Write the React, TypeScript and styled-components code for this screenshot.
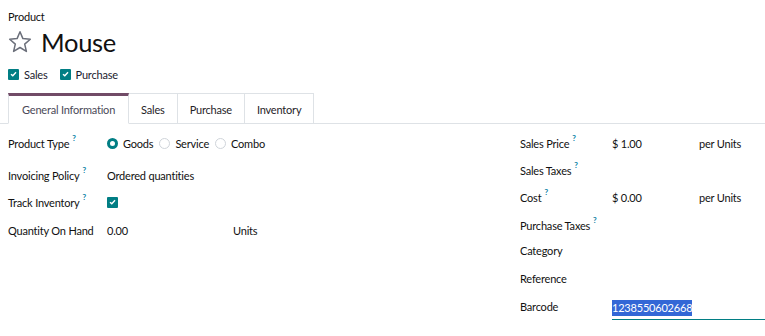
import React from "react";
import styled, { createGlobalStyle } from "styled-components";

const Global = createGlobalStyle`
  html, body { margin: 0; padding: 0; background: #fff; }
  body { font-family: Lato, "Noto Sans", sans-serif; font-size: 11px; letter-spacing: -0.2px; color: #1f2328; }
`;

const Page = styled.div`
  width: 765px;
  height: 336px;
  overflow: hidden;
  padding-top: 9px;
`;

const Header = styled.div`
  padding: 0 8px;
`;

const Kicker = styled.div`
  font-size: 11px;
  line-height: 16px;
  color: #111;
`;

const TitleRow = styled.div`
  display: flex;
  align-items: center;
  gap: 9px;
  height: 32px;
  margin-top: 1px;
`;

const Title = styled.h1`
  margin: 0;
  font-weight: 400;
  font-size: 25.5px;
  letter-spacing: -0.3px;
  line-height: 32px;
  color: #111;
`;

const Options = styled.div`
  display: flex;
  align-items: center;
  gap: 12px;
  margin-top: 8px;
  height: 16px;
`;

const Opt = styled.label`
  display: flex;
  align-items: center;
  gap: 5px;
  color: #1a1a2e;
`;

const Box = styled.span`
  width: 11px;
  height: 11px;
  border-radius: 1px;
  background: #017e84;
  display: inline-flex;
  align-items: center;
  justify-content: center;
  flex: none;
`;

const Tabs = styled.div`
  display: flex;
  margin-top: 11px;
  padding-left: 8px;
  border-bottom: 1px solid #dee2e6;
  height: 30px;
`;

const Tab = styled.div<{ $active?: boolean }>`
  display: flex;
  align-items: center;
  padding: 0 ${(p) => (p.$active ? 13 : 12)}px;
  margin-bottom: -1px;
  border: 1px solid #dee2e6;
  border-left-width: ${(p) => (p.$active ? 1 : 0)}px;
  border-top: ${(p) => (p.$active ? "3px solid #714b67" : "1px solid #dee2e6")};
  background: #fff;
  border-bottom-color: ${(p) => (p.$active ? "#fff" : "#dee2e6")};
  color: ${(p) => (p.$active ? "#4a4a58" : "#1f2328")};
  padding-top: ${(p) => (p.$active ? 0 : 2)}px;
`;

const Form = styled.div`
  display: flex;
  padding: 8px 0 0 8px;
`;

const Col = styled.div<{ $w: number }>`
  width: ${(p) => p.$w}px;
  display: flex;
  flex-direction: column;
  flex: none;
`;

const Row = styled.div<{ $mb: number }>`
  display: flex;
  align-items: center;
  height: 22px;
  margin-bottom: ${(p) => p.$mb}px;
`;

const Label = styled.div<{ $w: number }>`
  width: ${(p) => p.$w}px;
  flex: none;
  color: #111;
  display: flex;
  align-items: flex-start;
`;

const Help = styled.sup`
  font-size: 8px;
  color: #0e7fa6;
  margin-left: 3px;
  font-weight: 700;
  position: relative;
  top: -3px;
  line-height: 1;
  vertical-align: baseline;
`;

const Value = styled.div<{ $w?: number }>`
  width: ${(p) => (p.$w ? `${p.$w}px` : "auto")};
  flex: none;
  color: #111;
`;

const Radios = styled.div`
  display: flex;
  align-items: center;
  gap: 6px;
`;

const RadioItem = styled.span`
  display: flex;
  align-items: center;
  gap: 5px;
  color: #111;
`;

const Radio = styled.span<{ $on?: boolean }>`
  width: 11px;
  height: 11px;
  border-radius: 50%;
  box-sizing: border-box;
  border: ${(p) => (p.$on ? "3px solid #017e84" : "1px solid #cfd4da")};
  background: #fff;
  flex: none;
`;

const BarcodeField = styled.div`
  flex: 1;
  height: 22px;
  border-bottom: 1.5px solid #017e84;
  display: flex;
  align-items: center;
  margin-top: 5px;
`;

const Selected = styled.span`
  background: #3367d6;
  color: #fff;
  padding: 1px 0;
  line-height: 14px;
`;

const Check = () => (
  <svg width="7" height="6" viewBox="0 0 7 6">
    <path d="M1 3.2 L2.8 4.8 L6 1.3" stroke="#fff" strokeWidth="1.4" fill="none" />
  </svg>
);

const Star = () => (
  <svg width="24" height="24" viewBox="0 0 24 24">
    <path
      d="M12 1.8 L14.9 8.6 L22.3 9.2 L16.7 14.1 L18.4 21.4 L12 17.5 L5.6 21.4 L7.3 14.1 L1.7 9.2 L9.1 8.6 Z"
      fill="none"
      stroke="#6b6f7a"
      strokeWidth="1.5"
      strokeLinejoin="round"
    />
  </svg>
);

export default function App() {
  return (
    <Page>
      <Global />
      <Header>
        <Kicker>Product</Kicker>
        <TitleRow>
          <Star />
          <Title>Mouse</Title>
        </TitleRow>
        <Options>
          <Opt>
            <Box>
              <Check />
            </Box>
            Sales
          </Opt>
          <Opt>
            <Box>
              <Check />
            </Box>
            Purchase
          </Opt>
        </Options>
      </Header>
      <Tabs>
        <Tab $active>General Information</Tab>
        <Tab>Sales</Tab>
        <Tab>Purchase</Tab>
        <Tab>Inventory</Tab>
      </Tabs>
      <Form>
        <Col $w={512}>
          <Row $mb={10}>
            <Label $w={99}>
              Product Type<Help>?</Help>
            </Label>
            <Radios>
              <RadioItem>
                <Radio $on />
                Goods
              </RadioItem>
              <RadioItem>
                <Radio />
                Service
              </RadioItem>
              <RadioItem>
                <Radio />
                Combo
              </RadioItem>
            </Radios>
          </Row>
          <Row $mb={5}>
            <Label $w={99}>
              Invoicing Policy<Help>?</Help>
            </Label>
            <Value>Ordered quantities</Value>
          </Row>
          <Row $mb={6}>
            <Label $w={99}>
              Track Inventory<Help>?</Help>
            </Label>
            <Box>
              <Check />
            </Box>
          </Row>
          <Row $mb={0}>
            <Label $w={99}>Quantity On Hand</Label>
            <Value $w={126}>0.00</Value>
            <Value>Units</Value>
          </Row>
        </Col>
        <Col $w={245}>
          <Row $mb={5}>
            <Label $w={92}>
              Sales Price<Help>?</Help>
            </Label>
            <Value $w={87}>$ 1.00</Value>
            <Value>per Units</Value>
          </Row>
          <Row $mb={5}>
            <Label $w={92}>
              Sales Taxes<Help>?</Help>
            </Label>
          </Row>
          <Row $mb={6}>
            <Label $w={92}>
              Cost<Help>?</Help>
            </Label>
            <Value $w={87}>$ 0.00</Value>
            <Value>per Units</Value>
          </Row>
          <Row $mb={3}>
            <Label $w={92}>
              Purchase Taxes<Help>?</Help>
            </Label>
          </Row>
          <Row $mb={6}>
            <Label $w={92}>Category</Label>
          </Row>
          <Row $mb={6}>
            <Label $w={92}>Reference</Label>
          </Row>
          <Row $mb={0}>
            <Label $w={92}>Barcode</Label>
            <BarcodeField>
              <Selected>1238550602668</Selected>
            </BarcodeField>
          </Row>
        </Col>
      </Form>
    </Page>
  );
}
